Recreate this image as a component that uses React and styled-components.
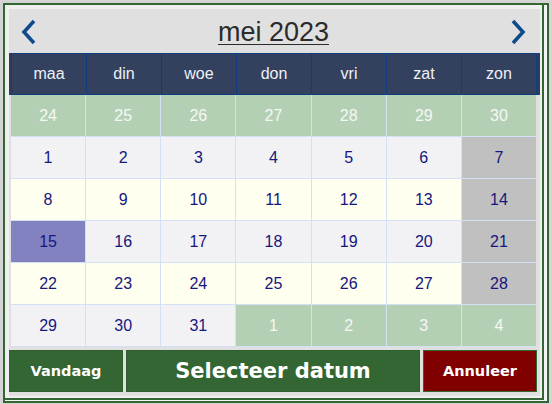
import React from 'react';
import styled, { createGlobalStyle } from 'styled-components';

const GlobalStyle = createGlobalStyle`
  html, body {
    margin: 0;
    padding: 0;
    background: #d4d4d4;
    font-family: "Liberation Sans", Arial, sans-serif;
  }
  body {
    width: 552px;
    height: 404px;
    overflow: hidden;
  }
`;

const Frame = styled.div`
  box-sizing: border-box;
  margin: 3px 0 0 3px;
  width: 546px;
  height: 400px;
  border: 2px solid #336633;
  background: #f4f4f4;
`;

const InnerFrame = styled.div`
  box-sizing: border-box;
  width: 539px;
  height: 395px;
  padding: 4px 2px 4px 4px;
  border-right: 2px solid #336633;
  border-bottom: 2px solid #336633;
  background: #f0f0f0;
`;

const Panel = styled.div`
  display: flex;
  flex-direction: column;
  width: 531px;
  height: 387px;
  background: #e0e0e0;
`;

const Nav = styled.div`
  height: 44px;
  display: flex;
  align-items: center;
  justify-content: space-between;
  padding: 2px 14px 0 12px;
  box-sizing: border-box;
`;

const Arrow = styled.button`
  border: none;
  background: none;
  padding: 0;
  width: 16px;
  height: 26px;
  display: flex;
  cursor: pointer;
`;

const MonthTitle = styled.span`
  font-size: 27px;
  color: #2b2b2b;
  text-decoration: underline;
  text-underline-offset: 3px;
  text-decoration-thickness: 1px;
  margin-top: 1px;
`;

const DayHeader = styled.div`
  background: #2f3d5b;
  padding: 0 3px 0 2px;
`;

const HeaderGrid = styled.div`
  display: grid;
  grid-template-columns: repeat(7, 1fr);
  gap: 1px;
  padding: 1px;
  background: #0c3d7e;
`;

const HeaderCell = styled.div`
  height: 40px;
  display: flex;
  align-items: center;
  justify-content: center;
  background: #33415e;
  color: #eef0f6;
  font-size: 16px;
`;

const DayGrid = styled.div`
  display: grid;
  grid-template-columns: repeat(7, 1fr);
  grid-auto-rows: 41px;
  gap: 1px;
  margin: 0 4px 0 2px;
  padding-bottom: 1px;
  background: #d3e0f6;
`;

const cellColors = {
  other: '#b4d0b4',
  even: '#f2f2f4',
  odd: '#fffff0',
  sunday: '#c0c0c0',
  selected: '#8282c0',
};

const DayCell = styled.div`
  display: flex;
  align-items: center;
  justify-content: center;
  font-size: 16px;
  background: ${p => cellColors[p.$kind]};
  color: ${p => (p.$kind === 'other' ? '#f4f8f4' : '#16167e')};
`;

const ButtonRow = styled.div`
  display: flex;
  gap: 3px;
  margin-top: 3px;
  height: 42px;
`;

const ActionButton = styled.button`
  box-sizing: border-box;
  width: ${p => p.$width}px;
  height: 42px;
  border: 1px solid ${p => (p.$danger ? '#336633' : '#2f5f2f')};
  background: ${p => (p.$danger ? '#800000' : '#336633')};
  color: #ffffff;
  font-family: "DejaVu Sans", Verdana, sans-serif;
  font-weight: bold;
  font-size: ${p => p.$size}px;
  padding: 0;
  cursor: pointer;
`;

const weekdays = ['maa', 'din', 'woe', 'don', 'vri', 'zat', 'zon'];

const buildDays = () => {
  const days = [];
  [24, 25, 26, 27, 28, 29, 30].forEach(d => days.push({ d, kind: 'other' }));
  for (let d = 1; d <= 31; d++) {
    const index = days.length;
    const col = index % 7;
    const row = Math.floor(index / 7);
    let kind = row % 2 === 1 ? 'even' : 'odd';
    if (col === 6) kind = 'sunday';
    if (d === 15) kind = 'selected';
    days.push({ d, kind });
  }
  [1, 2, 3, 4].forEach(d => days.push({ d, kind: 'other' }));
  return days;
};

const Chevron = ({ dir }) => (
  <svg width="16" height="26" viewBox="0 0 16 26">
    <polyline
      points={dir === 'left' ? '13,2 3,13 13,24' : '3,2 13,13 3,24'}
      fill="none"
      stroke="#0f4a8a"
      strokeWidth="3.6"
    />
  </svg>
);

const App = () => {
  const days = buildDays();

  return (
    <>
      <GlobalStyle />
      <Frame>
        <InnerFrame>
          <Panel>
            <Nav>
              <Arrow aria-label="vorige maand">
                <Chevron dir="left" />
              </Arrow>
              <MonthTitle>mei 2023</MonthTitle>
              <Arrow aria-label="volgende maand">
                <Chevron dir="right" />
              </Arrow>
            </Nav>
            <DayHeader>
              <HeaderGrid>
                {weekdays.map(w => (
                  <HeaderCell key={w}>{w}</HeaderCell>
                ))}
              </HeaderGrid>
            </DayHeader>
            <DayGrid>
              {days.map((day, i) => (
                <DayCell key={i} $kind={day.kind}>
                  {day.d}
                </DayCell>
              ))}
            </DayGrid>
            <ButtonRow>
              <ActionButton $width={114} $size={14.5}>Vandaag</ActionButton>
              <ActionButton $width={294} $size={21}>Selecteer datum</ActionButton>
              <ActionButton $width={114} $size={14.5} $danger>Annuleer</ActionButton>
            </ButtonRow>
          </Panel>
        </InnerFrame>
      </Frame>
    </>
  );
};

export default App;
